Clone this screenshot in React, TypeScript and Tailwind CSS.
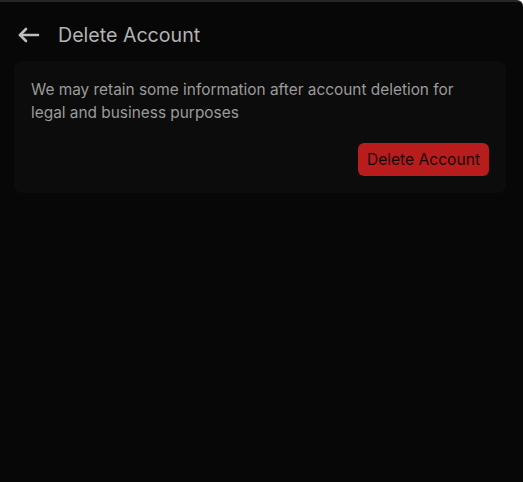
import React from 'react';

const BackArrow: React.FC = () => (
    <svg width="24" height="18" viewBox="0 0 24 18" fill="none" stroke="currentColor" strokeWidth="2.6" strokeLinecap="round" strokeLinejoin="round">
        <path d="M21 9H3" />
        <path d="M9 3L3 9l6 6" />
    </svg>
);

const App: React.FC = () => {
    return (
        <div className="min-h-[482px] w-full bg-[#070707] border-t-2 border-[#262626] rounded-tr-md" style={{ fontFamily: 'Inter, "Noto Sans", sans-serif' }}>
            <div className="flex items-center h-[66px] -mt-[2px] pt-[5px]">
                <header className="flex items-center gap-[17px] pl-[17px]">
                    <button className="text-[#bdbdbd]" aria-label="Back">
                        <BackArrow />
                    </button>
                    <h1 className="text-[19.6px] text-[#b3b3b3]">Delete Account</h1>
                </header>
            </div>
            <div className="ml-[14px] mr-[17px] -mt-[5px] rounded-lg bg-[#0c0c0c] pl-[17px] pr-[17px] pt-[17px] pb-[17px]">
                <p className="text-[15.4px] leading-[23px] text-[#9b9b9b]">
                    We may retain some information after account deletion for legal and business purposes
                </p>
                <div className="flex justify-end mt-[19px]">
                    <button className="h-[33px] px-[9px] rounded-md bg-[#b91c1c] text-[15.6px] text-[#140606]">
                        Delete Account
                    </button>
                </div>
            </div>
        </div>
    );
};

export default App;
